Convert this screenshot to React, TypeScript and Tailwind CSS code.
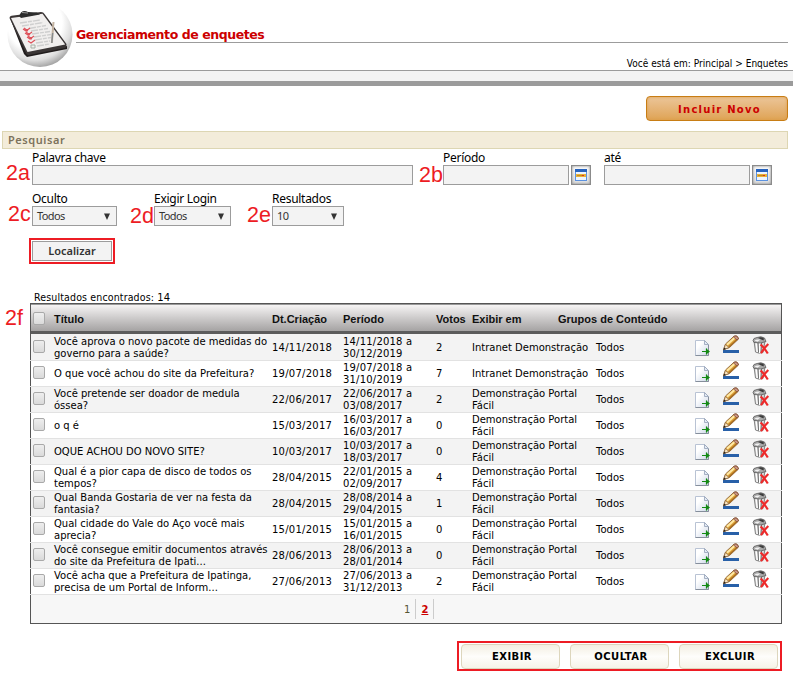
import type { ReactNode } from "react";

type Poll = {
  title: string[];
  created: string;
  period: [string, string];
  votes: number;
  site: string[];
};

const PORTAL = ["Demonstração Portal", "Fácil"];
const INTRANET = ["Intranet Demonstração"];

const polls: Poll[] = [
  { title: ["Você aprova o novo pacote de medidas do", "governo para a saúde?"], created: "14/11/2018", period: ["14/11/2018 a", "30/12/2019"], votes: 2, site: INTRANET },
  { title: ["O que você achou do site da Prefeitura?"], created: "19/07/2018", period: ["19/07/2018 a", "31/10/2019"], votes: 7, site: INTRANET },
  { title: ["Você pretende ser doador de medula", "óssea?"], created: "22/06/2017", period: ["22/06/2017 a", "03/08/2017"], votes: 2, site: PORTAL },
  { title: ["o q é"], created: "15/03/2017", period: ["16/03/2017 a", "16/03/2017"], votes: 0, site: PORTAL },
  { title: ["OQUE ACHOU DO NOVO SITE?"], created: "10/03/2017", period: ["10/03/2017 a", "18/03/2017"], votes: 0, site: PORTAL },
  { title: ["Qual é a pior capa de disco de todos os", "tempos?"], created: "28/04/2015", period: ["22/01/2015 a", "02/09/2017"], votes: 4, site: PORTAL },
  { title: ["Qual Banda Gostaria de ver na festa da", "fantasia?"], created: "28/04/2015", period: ["28/08/2014 a", "29/04/2015"], votes: 1, site: PORTAL },
  { title: ["Qual cidade do Vale do Aço você mais", "aprecia?"], created: "15/01/2015", period: ["15/01/2015 a", "16/01/2015"], votes: 0, site: PORTAL },
  { title: ["Você consegue emitir documentos através", "do site da Prefeitura de Ipati..."], created: "28/06/2013", period: ["28/06/2013 a", "28/01/2014"], votes: 0, site: PORTAL },
  { title: ["Você acha que a Prefeitura de Ipatinga,", "precisa de um Portal de Inform..."], created: "27/06/2013", period: ["27/06/2013 a", "31/12/2013"], votes: 2, site: PORTAL },
];

const columns = "grid grid-cols-[23px_218px_71px_93px_36px_124px_99px_27px_30px_1fr]";

function Logo() {
  return (
    <svg width="76" height="70" viewBox="0 0 76 70" className="shrink-0">
      <defs>
        <radialGradient id="ball" cx="0.42" cy="0.32" r="0.7">
          <stop offset="0.6" stopColor="#fff" />
          <stop offset="0.82" stopColor="#dedede" />
          <stop offset="1" stopColor="#a0a0a0" />
        </radialGradient>
      </defs>
      <circle cx="40" cy="34.5" r="32.5" fill="url(#ball)" />
      <path d="M10 18 L12 17 L28 53 L67 46 L67 49 L27 57 L24 54Z" fill="#211d1d" />
      <path d="M9.500 18 Q9.500 16 11.500 15.700 L41 12 Q43.500 12 44.500 14 L66.500 44 Q67 47 65 48 L29 55 Q27 55.500 26 53Z" fill="#3b3636" />
      <path d="M11 18 L42.500 13.700 L65.200 44.500 L27.500 52Z" fill="#f1efee" />
      <path d="M19 16 L21 12.500 Q24 10 28 12 L37 12.500 L40 14.500 L21 18Z" fill="#2c2c2c" />
      <path d="M22 12.500 L28 13" stroke="#9a9a9a" />
      <path d="M20 23 L40 20 M22 26 L43 22.500 M29 28.500 L46 25.500 M31 31 L48 28.500 M32 34 L50 31.500 M34 37 L51 34.500 M35 40 L51 37.500 M36 43 L50 41 M37 46 L50 44" stroke="#cfcfcf" strokeWidth="1.400" strokeDasharray="7 1 4 1" />
      <path d="M23 29 l3 2 l4 -3 M25 33 l3 2 l4 -3 M27 37 l3 2 l4 -3 M28 41 l3 2 l4 -3 M24 28 l4 3 M26 32 l4 3 M28 36 l4 3" fill="none" stroke="#dd4f58" strokeWidth="1.100" />
      <path d="M31 45 h4 v3 h-4z" fill="none" stroke="#a5b0a5" />
      <path d="M53.500 22 L51.800 43" stroke="#c3b3a1" strokeWidth="2" />
      <path d="M52.700 33 L51.800 43" stroke="#858a8d" strokeWidth="1.400" />
    </svg>
  );
}

function CalendarButton() {
  return (
    <button type="button" className="ml-[2px] flex h-5 w-5 shrink-0 items-center justify-center border border-[#8b8b8b] bg-linear-to-b from-white to-[#dcdcdc] shadow-[inset_0_0_3px_#808080]">
      <svg width="12" height="12" viewBox="0 0 12 12" shapeRendering="crispEdges">
        <rect width="12" height="12" fill="#5b92e0" />
        <rect width="12" height="3" fill="#2763be" />
        <rect x="1" y="3" width="10" height="8" fill="#eef5ff" />
        <rect x="1" y="5" width="10" height="3" fill="#e7b33b" />
        <rect x="2" y="6" width="5" height="1" fill="#c58a1d" />
        <rect x="7" y="6" width="2" height="1" fill="#e0301c" />
      </svg>
    </button>
  );
}

function PublishIcon() {
  return (
    <svg width="16" height="17" viewBox="0 0 16 17" className="mt-px">
      <defs>
        <linearGradient id="page" x1="0" y1="0" x2="1" y2="1">
          <stop offset="0.3" stopColor="#fff" />
          <stop offset="1" stopColor="#cdd7e8" />
        </linearGradient>
      </defs>
      <path d="M0.500 0.500 H9.500 L13.500 4.500 V15.500 H0.500Z" fill="url(#page)" stroke="#b9c3d4" />
      <path d="M0.500 15.500 H13.500 V5" fill="none" stroke="#858e9b" />
      <path d="M9.500 0.500 V4.500 H13.500Z" fill="#e4ebf5" stroke="#93a0b5" strokeWidth="0.800" />
      <path d="M7 11.500 H13 M11.500 8.500 V14.500" fill="none" stroke="#138a13" strokeWidth="1.200" />
      <path d="M11 8.500 L15 11.500 L11 14.500Z" fill="#138a13" />
    </svg>
  );
}

function EditIcon() {
  return (
    <svg width="18" height="19" viewBox="0 0 18 19" className="-mt-[6px]">
      <rect x="1" y="15" width="16" height="3" fill="#2860a8" />
      <path d="M1.500 14.700 L3.500 9 L12 1.200 Q15.500 -0.300 16.500 4 L7.500 12.500Z" fill="#dfa53a" stroke="#8a6238" strokeWidth="0.900" />
      <path d="M5 9.800 L13 2.500" stroke="#ffe9a6" strokeWidth="1.900" />
      <path d="M7 11.800 L15.500 4" stroke="#aa6d22" strokeWidth="1.300" />
      <path d="M12.500 1 Q15.500 0 16.500 3.800 L15 5 L11.500 2Z" fill="#cc9684" stroke="#744334" strokeWidth="0.700" />
      <path d="M1.500 14.700 L3.500 9.500 L7 12.500Z" fill="#f7e3bf" stroke="#8a6238" strokeWidth="0.700" />
      <path d="M1.300 15 L2.300 12.500 L4 14Z" fill="#222" />
    </svg>
  );
}

function DeleteIcon() {
  return (
    <svg width="18" height="19" viewBox="0 0 18 19" className="-mt-[5px]">
      <path d="M2 5 L3.500 16 Q6.500 18 11 16.500 L13 5Z" fill="#d6d6d6" stroke="#777" strokeWidth="0.900" />
      <path d="M4.300 7 L5.300 16 M7.800 7 V17" stroke="#fff" strokeWidth="1.500" />
      <path d="M6 7 L6.500 16.500 M9.500 7 L9 16" stroke="#6a6a6a" />
      <path d="M1 4.500 Q1 2 5 1.500 Q9 -0.200 12.500 2 L14 5.500 Q9 8 2 6.500Z" fill="#a9a9a9" stroke="#5a5a5a" strokeWidth="0.800" />
      <path d="M2.500 4.500 Q4 3 8.500 3.500 L5.500 5.700Z" fill="#f2f2f2" />
      <path d="M6 2 Q9 0.500 12 2.500 L11.500 4.500Z" fill="#3c3c3c" />
      <path d="M8.500 8.500 Q12.500 12 15.800 17.500 M16.300 8 Q12 12 9 17.300" fill="none" stroke="#ee2a2a" strokeWidth="2.200" />
    </svg>
  );
}

function Checkbox({ className = "" }: { className?: string }) {
  return (
    <input
      type="checkbox"
      className={`ml-[2px] h-[13px] w-3 appearance-none rounded-[2px] border border-[#a9a9a9] bg-linear-to-b from-[#eeeeee] to-[#dadada] ${className}`}
    />
  );
}

function Note({ children, className }: { children: ReactNode; className: string }) {
  return (
    <span className={`shrink-0 font-['Liberation_Sans',Arial,sans-serif] text-[21.500px] leading-5 text-[#ed1c24] ${className}`}>
      {children}
    </span>
  );
}

function Label({ children }: { children: ReactNode }) {
  return (
    <span className="block h-[15px] text-[12px] leading-[15px] tracking-[-0.280px] whitespace-nowrap text-black">
      {children}
    </span>
  );
}

function TextField({ label, className }: { label: string; className: string }) {
  return (
    <label className={`block shrink-0 ${className}`}>
      <Label>{label}</Label>
      <input type="text" className="block h-5 w-full border border-[#9c9c9c] bg-[#f3f3f3]" />
    </label>
  );
}

function SelectField({ label, value, className }: { label: string; value: string; className: string }) {
  return (
    <div className={`shrink-0 ${className}`}>
      <Label>{label}</Label>
      <div className="flex h-5 items-center justify-between border border-[#9c9c9c] bg-[#f3f3f3] pr-[6px] pl-1 text-[11px] tracking-[-0.600px] text-[#333]">
        <span>{value}</span>
        <svg width="6" height="7" viewBox="0 0 6 7">
          <path d="M0 0.500 H6 L3 7Z" fill="#333" />
        </svg>
      </div>
    </div>
  );
}

function PollRow({ poll, odd }: { poll: Poll; odd: boolean }) {
  return (
    <div className={`-mx-px h-[26px] border-b border-[#e2e2e2] ${odd ? "bg-[#f3f3f3]" : "bg-white"}`}>
      <div className={`${columns} h-[25px] items-center border-x border-[#555] leading-3`}>
        <Checkbox className="-mt-[3px]" />
        <div className="whitespace-nowrap">
          {poll.title.map((line) => (
            <div key={line}>{line}</div>
          ))}
        </div>
        <span className="tracking-[0.250px]">{poll.created}</span>
        <div className="tracking-[0.200px]">
          {poll.period.map((line, i) => (
            <div key={i}>{line}</div>
          ))}
        </div>
        <span>{poll.votes}</span>
        <div className="whitespace-nowrap">
          {poll.site.map((line) => (
            <div key={line}>{line}</div>
          ))}
        </div>
        <span>Todos</span>
        <PublishIcon />
        <EditIcon />
        <DeleteIcon />
      </div>
    </div>
  );
}

function ActionButton({ children }: { children: ReactNode }) {
  return (
    <button type="button" className="h-[25px] w-[99px] rounded-[4px] border border-[#ddd6bd] bg-linear-to-b from-[#f3efe2] via-[#fefdfb] to-[#f6f3e8] pl-[3px] text-[10px] font-bold tracking-[0.450px] text-black">
      {children}
    </button>
  );
}

export default function App() {
  return (
    <div className="h-[677px] w-[793px] overflow-hidden bg-white font-['DejaVu_Sans',Verdana,sans-serif] text-[10px] text-black">
      <header className="flex h-[70px]">
        <Logo />
        <div className="flex w-[712px] flex-col">
          <h1 className="h-[43px] border-b border-[#9c9c9c] pt-[27px] text-[12.500px] leading-4 font-bold tracking-[-0.430px] whitespace-nowrap text-[#c00]">
            Gerenciamento de enquetes
          </h1>
          <p className="mt-[14px] text-right font-['DejaVu_Sans_Condensed','DejaVu_Sans',sans-serif] text-[10px] leading-[14px] font-stretch-condensed tracking-[0.030px]">
            Você está em: Principal &gt; Enquetes
          </p>
        </div>
      </header>
      <div className="h-4 border-t border-b-5 border-[#9b9b9b] bg-[#f3f3f3]" />

      <div className="mt-[10px] flex justify-end pr-[5px]">
        <button type="button" className="h-[25px] w-[142px] rounded-[4px] border border-[#c87d14] bg-linear-to-b from-[#ebc598] to-[#dfa354] pt-px pl-[5px] text-[10px] font-bold tracking-[1.250px] text-[#c00] shadow-[inset_0_0_3px_#dc9c49]">
          Incluir Novo
        </button>
      </div>

      <h2 className="mt-[10px] ml-[2px] h-[18px] w-[786px] border border-[#ddd6b3] bg-[#f3ecda] pl-[5px] font-['Noto_Sans','Open_Sans',sans-serif] text-[11px] leading-4 font-semibold tracking-[0.550px] text-[#7c725c]">
        Pesquisar
      </h2>

      <form className="font-['Noto_Sans','Open_Sans',sans-serif]">
        <div className="mt-px flex items-end">
          <Note className="mb-[2px] w-8 pl-[6px]">2a</Note>
          <TextField label="Palavra chave" className="w-[381px]" />
          <Note className="w-[30px] pl-[6px]">2b</Note>
          <TextField label="Período" className="w-[126px]" />
          <CalendarButton />
          <TextField label="até" className="ml-[13px] w-[146px]" />
          <CalendarButton />
        </div>
        <div className="mt-[6px] flex items-end">
          <Note className="mb-[2px] w-8 pl-[8px]">2c</Note>
          <SelectField label="Oculto" value="Todos" className="w-[85px]" />
          <Note className="w-[37px] pl-[13px]">2d</Note>
          <SelectField label="Exigir Login" value="Todos" className="w-[77px]" />
          <Note className="mb-px w-[41px] pl-[16px]">2e</Note>
          <SelectField label="Resultados" value="10" className="w-[72px]" />
        </div>
        <div className="mt-3 ml-[29px] h-[26px] w-[86px] border-2 border-[#ed1c24] p-px">
          <button type="button" className="h-5 w-full border border-[#9c9c9c] bg-[#f3f3f3] text-[11px] leading-4 font-semibold text-[#333]">
            Localizar
          </button>
        </div>
      </form>

      <p className="mt-[26px] ml-[34px] h-[13px] text-[10px] leading-[14px] whitespace-nowrap">
        <span className="font-['DejaVu_Sans_Condensed','DejaVu_Sans',sans-serif] text-[10.500px] font-stretch-condensed tracking-[0.150px]">Resultados encontrados:</span> 14
      </p>
      <div className="flex items-start">
        <Note className="mt-[5px] w-[30px] pl-[5px]">2f</Note>
        <section className="w-[752px] border border-[#555]">
          <div className={`${columns} h-[30px] items-center border-t border-b-3 border-t-[#999] border-b-[#5c5c5c] bg-linear-to-b from-[#f6f4f4] to-[#a5a3a3] font-['Liberation_Sans',Arial,sans-serif] text-[11px] font-bold whitespace-nowrap text-[#111]`}>
            <Checkbox />
            <span className="pt-[2px]">Título</span>
            <span className="pt-[2px]">Dt.Criação</span>
            <span className="pt-[2px]">Período</span>
            <span className="pt-[2px]">Votos</span>
            <span className="pt-[2px]">Exibir em</span>
            <span className="-ml-[38px] pt-[2px]">Grupos de Conteúdo</span>
          </div>
          <div className="h-px bg-[#f3f3f3]" />
          {polls.map((poll, i) => (
            <PollRow key={i} poll={poll} odd={i % 2 === 0} />
          ))}
          <nav className="flex h-7 items-center bg-[#f7f7f7] pl-[373px]">
            <span className="h-5 border-r border-[#ccc] pr-[5px] leading-[22px] text-[#553]">1</span>
            <span className="h-5 border-r border-[#ccc] px-[5px] leading-[22px] font-bold text-[#c00] underline">2</span>
          </nav>
        </section>
      </div>

      <div className="mt-[17px] ml-[457px] flex h-[30px] w-[325px] justify-between border-2 border-[#ed1c24] px-[2px] py-px">
        <ActionButton>EXIBIR</ActionButton>
        <ActionButton>OCULTAR</ActionButton>
        <ActionButton>EXCLUIR</ActionButton>
      </div>
    </div>
  );
}
